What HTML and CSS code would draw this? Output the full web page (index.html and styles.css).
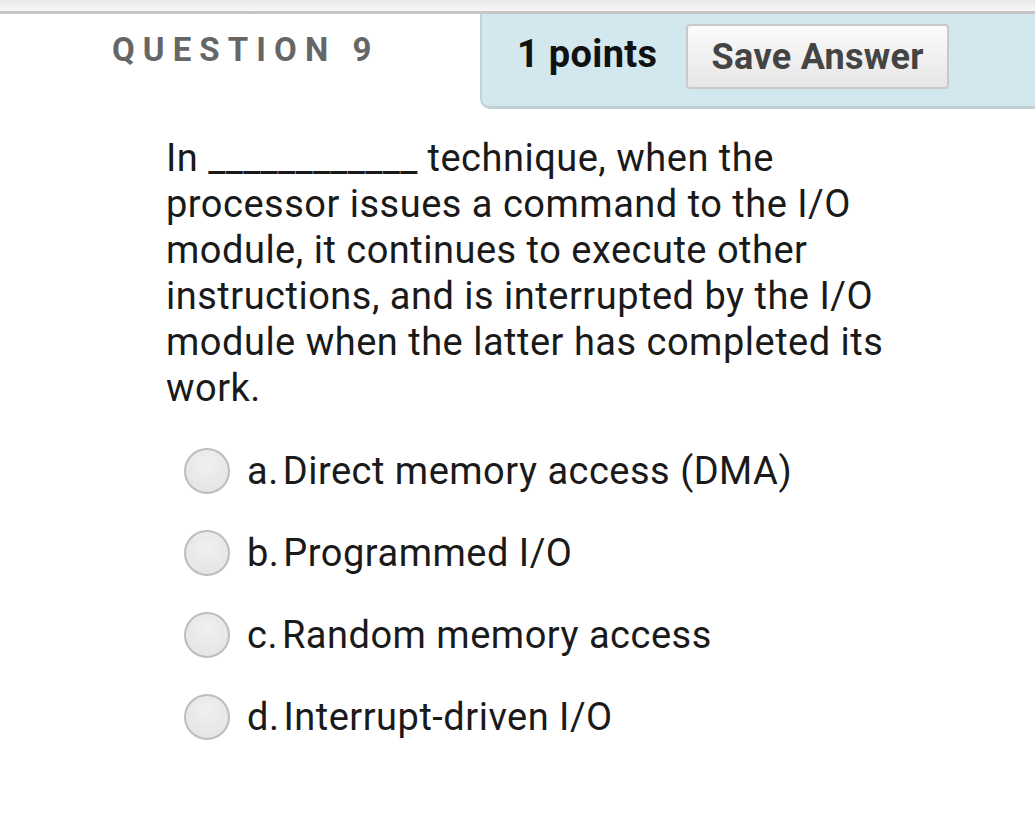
FILE: index.html
```html
<!DOCTYPE html>
<html>
<head>
<meta charset="utf-8">
<link rel="stylesheet" href="styles.css">
</head>
<body>
<div class="topbar"></div>
<div class="header">
  <div class="qtitle">QUESTION 9</div>
  <div class="panel">
    <span class="points">1 points</span>
    <button class="save">Save Answer</button>
  </div>
</div>
<div class="content">
  <p class="qtext">In <span class="blank">____________</span> technique, when the processor issues a command to the I/O module, it continues to execute other instructions, and is interrupted by the I/O module when the latter has completed its work.</p>
  <ul class="options">
    <li class="opt"><span class="radio"></span><span class="lbl">a.</span><span>Direct memory access (DMA)</span></li>
    <li class="opt"><span class="radio"></span><span class="lbl">b.</span><span>Programmed I/O</span></li>
    <li class="opt"><span class="radio"></span><span class="lbl">c.</span><span>Random memory access</span></li>
    <li class="opt"><span class="radio"></span><span class="lbl">d.</span><span>Interrupt-driven I/O</span></li>
  </ul>
</div>
</body>
</html>
```
FILE: styles.css
```css
html, body {
  margin: 0;
  padding: 0;
  background: #fff;
  font-family: Roboto, "Liberation Sans", sans-serif;
  width: 1035px;
  overflow: hidden;
}
.topbar {
  height: 11px;
  background: linear-gradient(#e9e9e9, #f6f6f6);
  border-bottom: 3px solid #c6c6c6;
}
.header {
  display: flex;
  height: 95px;
}
.qtitle {
  width: 368px;
  padding-left: 112px;
  padding-top: 20px;
  font-size: 33px;
  font-weight: 700;
  letter-spacing: 8.1px;
  color: #666;
  line-height: 32px;
}
.panel {
  flex: 1;
  display: flex;
  align-items: flex-start;
  background: #d2e8ee;
  border-left: 2px solid #c2d3d8;
  border-bottom: 3px solid #c2d0d4;
  border-bottom-left-radius: 10px;
  padding-left: 35px;
  padding-top: 10px;
}
.points {
  font-size: 38px;
  font-weight: 700;
  letter-spacing: 0.3px;
  color: #111;
  line-height: 40px;
  margin-top: 10px;
  margin-right: 29px;
}
.save {
  font-family: Roboto, "Liberation Sans", sans-serif;
  font-size: 36px;
  font-weight: 700;
  letter-spacing: 0.3px;
  color: #444;
  width: 263px;
  height: 65px;
  padding: 0;
  background: linear-gradient(#fbfbfb, #e6e6e6);
  border: 2px solid #c9c9c9;
  border-radius: 4px;
}
.content {
  padding-left: 166px;
}
.qtext {
  margin: 26px 0 0 0;
  width: 730px;
  font-size: 38px;
  letter-spacing: 0.5px;
  line-height: 46px;
  color: #1a1a1a;
}
.blank {
  letter-spacing: 0.3px;
}
.options {
  list-style: none;
  margin: 19px 0 0 18px;
  padding: 0;
}
.opt {
  display: flex;
  align-items: center;
  height: 82px;
  font-size: 38px;
  letter-spacing: 0.5px;
  color: #1a1a1a;
}
.radio {
  width: 42px;
  height: 42px;
  border-radius: 50%;
  border: 2px solid #bdbdbd;
  background: radial-gradient(circle at 50% 35%, #f0f0f0, #e2e2e2);
  margin-right: 17px;
  flex: none;
}
.lbl {
  margin-right: 4px;
}
```
